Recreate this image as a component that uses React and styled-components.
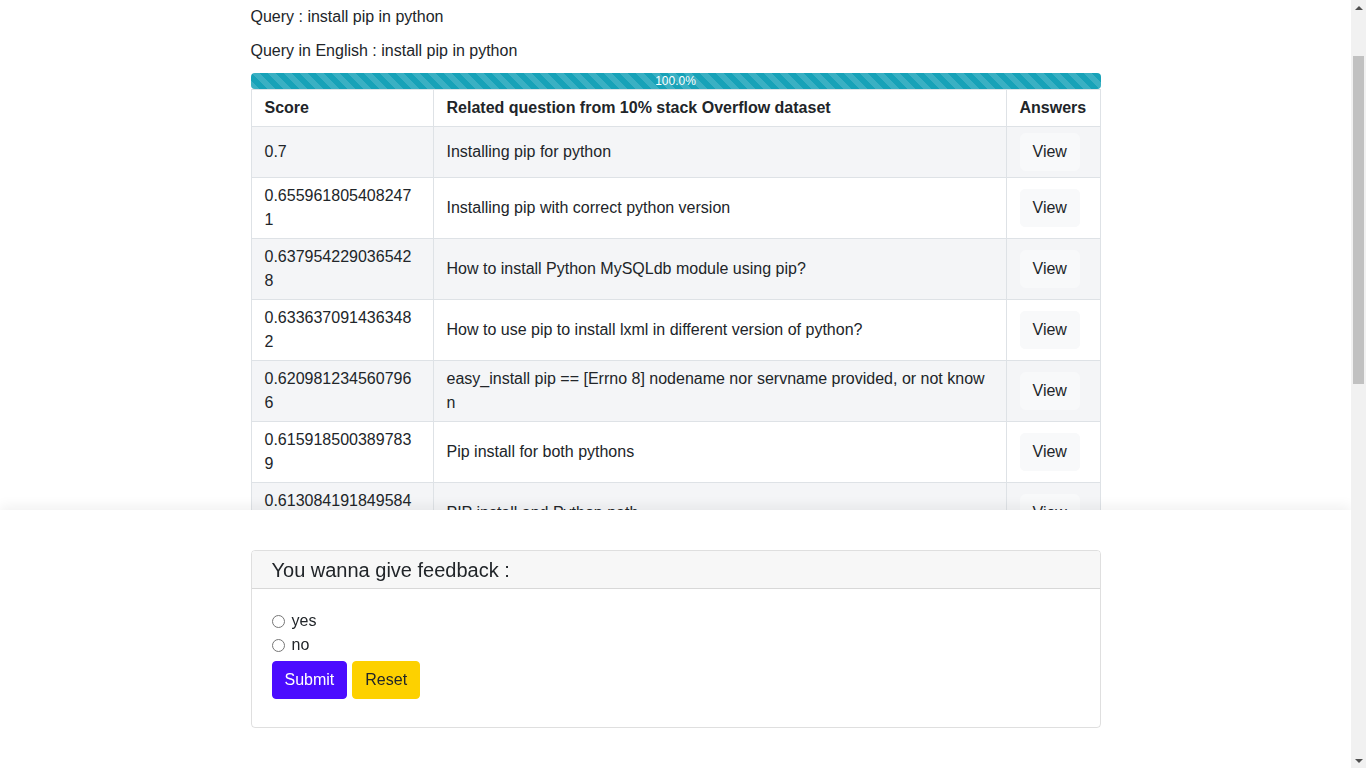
import React, { useLayoutEffect } from 'react';
import styled, { createGlobalStyle } from 'styled-components';

const GlobalStyle = createGlobalStyle`
	html {
		overflow-y: scroll;
		scroll-behavior: auto;
	}
	body {
		margin: 0;
		padding-right: 15px;
		background: #fff;
		color: #212529;
		font-family: "Liberation Sans", Arial, Helvetica, sans-serif;
		font-size: 16px;
		line-height: 24px;
	}
	*, *::before, *::after {
		box-sizing: border-box;
	}
`;

const Page = styled.div`
	width: 850px;
	margin: 0 auto;
	padding-bottom: 300px;
`;

const Title = styled.h1`
	margin: 0 0 21px;
	padding-top: 40px;
	font-size: 32px;
	line-height: 40px;
	font-weight: 500;
`;

const QueryLine = styled.p`
	margin: 0 0 10px;
	line-height: 24px;
`;

const Progress = styled.div`
	margin-top: 1px;
	height: 16px;
	border-radius: 4px;
	overflow: hidden;
	background: #e9ecef;
	font-size: 12px;
	line-height: 16px;
`;

const ProgressBar = styled.div`
	height: 100%;
	color: #fff;
	text-align: center;
	background-color: #17a2b8;
	background-image: linear-gradient(
		45deg,
		rgba(255, 255, 255, 0.15) 25%,
		transparent 25%,
		transparent 50%,
		rgba(255, 255, 255, 0.15) 50%,
		rgba(255, 255, 255, 0.15) 75%,
		transparent 75%,
		transparent
	);
	background-size: 16px 16px;
`;

const Table = styled.table`
	width: 850px;
	table-layout: fixed;
	border-collapse: collapse;
	word-break: break-all;
`;

const Cell = styled.td`
	padding: 6px 13px;
	border: 1px solid #dee2e6;
	vertical-align: middle;
	text-align: left;
`;

const HeadCell = styled(Cell).attrs({ as: 'th' })`
	font-weight: 700;
	word-break: normal;
`;

const Row = styled.tr`
	background: ${p => (p.$striped ? '#f4f5f7' : '#fff')};
`;

const ViewButton = styled.button`
	font-family: inherit;
	font-size: 16px;
	line-height: 24px;
	padding: 6px 12px;
	color: #212529;
	background: #f8f9fa;
	border: 1px solid #f8f9fa;
	border-radius: 5px;
	cursor: pointer;
`;

const Footer = styled.footer`
	position: fixed;
	left: 0;
	right: 15px;
	bottom: 0;
	padding: 40px 0;
	background: #fff;
	box-shadow: 0 -4px 12px rgba(0, 0, 0, 0.06);
`;

const Card = styled.div`
	width: 850px;
	margin: 0 auto;
	border: 1px solid rgba(0, 0, 0, 0.125);
	border-radius: 4px;
	overflow: hidden;
`;

const CardHeader = styled.div`
	padding: 7px 20px 5px;
	font-size: 20px;
	line-height: 25px;
	background: #f7f7f7;
	border-bottom: 1px solid rgba(0, 0, 0, 0.125);
`;

const CardBody = styled.form`
	padding: 20px 20px 28px;
`;

const RadioLabel = styled.label`
	display: flex;
	align-items: center;
	height: 24px;

	input {
		width: 13px;
		height: 13px;
		margin: 0 7px 0 0;
	}
`;

const Actions = styled.div`
	display: flex;
	gap: 5px;
	margin-top: 4px;
`;

const ActionButton = styled.button`
	font-family: inherit;
	font-size: 16px;
	line-height: 24px;
	padding: 6px 12px;
	border: 1px solid ${p => p.$bg};
	border-radius: 4px;
	background: ${p => p.$bg};
	color: ${p => p.$fg};
	cursor: pointer;
`;

/* classic window scrollbar, drawn because the headless browser hides its own */
const ScrollTrack = styled.div`
	position: fixed;
	top: 0;
	right: 0;
	bottom: 0;
	width: 15px;
	background: #f1f1f1;
	display: flex;
	flex-direction: column;
	z-index: 10;
`;

const ScrollArrow = styled.div`
	flex: none;
	width: 15px;
	height: 15px;
	display: flex;
	align-items: center;
	justify-content: center;
`;

const ScrollSpace = styled.div`
	flex: 1;
	width: 100%;
	padding: 0 2px;
`;

const ScrollThumb = styled.div`
	background: #c1c1c1;
`;

const Arrow = ({ down }) => (
	<ScrollArrow>
		<svg width="8" height="4" viewBox="0 0 8 4">
			<path d={down ? 'M0 0H8L4 4Z' : 'M0 4H8L4 0Z'} fill="#505050" />
		</svg>
	</ScrollArrow>
);

const results = [
	['0.7', 'Installing pip for python'],
	['0.6559618054082471', 'Installing pip with correct python version'],
	['0.6379542290365428', 'How to install Python MySQLdb module using pip?'],
	['0.6336370914363482', 'How to use pip to install lxml in different version of python?'],
	['0.6209812345607966', 'easy_install pip == [Errno 8] nodename nor servname provided, or not known'],
	['0.6159185003897839', 'Pip install for both pythons'],
	['0.6130841918495843', 'PIP install and Python path'],
	['0.6087712930415839', 'pip install fails with "connection error"'],
	['0.6041293871456321', 'How do I install pip on Windows?'],
	['0.5998127345098712', 'Installing python packages without pip'],
	['0.5961238740912384', 'pip: command not found after installing python'],
	['0.5927719384710293', 'How to upgrade pip to the latest version?'],
	['0.5893120478192734', 'Install a specific version of a package with pip'],
	['0.5851902376410982', 'pip install in a virtualenv uses system python'],
	['0.5820938471029384', 'Can pip be used to install packages offline?'],
	['0.5794012837461029', 'Where does pip install packages?'],
	['0.5762918374019283', 'pip install from a requirements file'],
	['0.5731029384710293', 'Why is pip not installed with python 3.4?'],
	['0.5702938471029384', 'Uninstalling packages installed with pip'],
	['0.5679102837410293', 'Using pip behind a proxy'],
];

const App = () => {
	useLayoutEffect(() => {
		window.scrollTo(0, 96);
	}, []);

	return (
		<>
			<GlobalStyle />
			<Page>
				<Title>Question search</Title>
				<QueryLine>Query : install pip in python</QueryLine>
				<QueryLine>Query in English : install pip in python</QueryLine>
				<Progress>
					<ProgressBar style={{ width: '100%' }}>100.0%</ProgressBar>
				</Progress>
				<Table>
					<colgroup>
						<col style={{ width: 182 }} />
						<col style={{ width: 573 }} />
						<col />
					</colgroup>
					<thead>
						<Row>
							<HeadCell>Score</HeadCell>
							<HeadCell>Related question from 10% stack Overflow dataset</HeadCell>
							<HeadCell>Answers</HeadCell>
						</Row>
					</thead>
					<tbody>
						{results.map(([score, question], i) => (
							<Row key={i} $striped={i % 2 === 0}>
								<Cell>{score}</Cell>
								<Cell>{question}</Cell>
								<Cell><ViewButton type="button">View</ViewButton></Cell>
							</Row>
						))}
					</tbody>
				</Table>
			</Page>
			<Footer>
				<Card>
					<CardHeader>You wanna give feedback :</CardHeader>
					<CardBody onSubmit={e => e.preventDefault()}>
						<RadioLabel><input type="radio" name="feedback" value="yes" />yes</RadioLabel>
						<RadioLabel><input type="radio" name="feedback" value="no" />no</RadioLabel>
						<Actions>
							<ActionButton type="submit" $bg="#4b0cff" $fg="#fff">Submit</ActionButton>
							<ActionButton type="reset" $bg="#fdd100" $fg="#212529">Reset</ActionButton>
						</Actions>
					</CardBody>
				</Card>
			</Footer>
			<ScrollTrack aria-hidden="true">
				<Arrow />
				<ScrollSpace>
					<ScrollThumb style={{ marginTop: 41, height: 328 }} />
				</ScrollSpace>
				<Arrow down />
			</ScrollTrack>
		</>
	);
};

export default App;
